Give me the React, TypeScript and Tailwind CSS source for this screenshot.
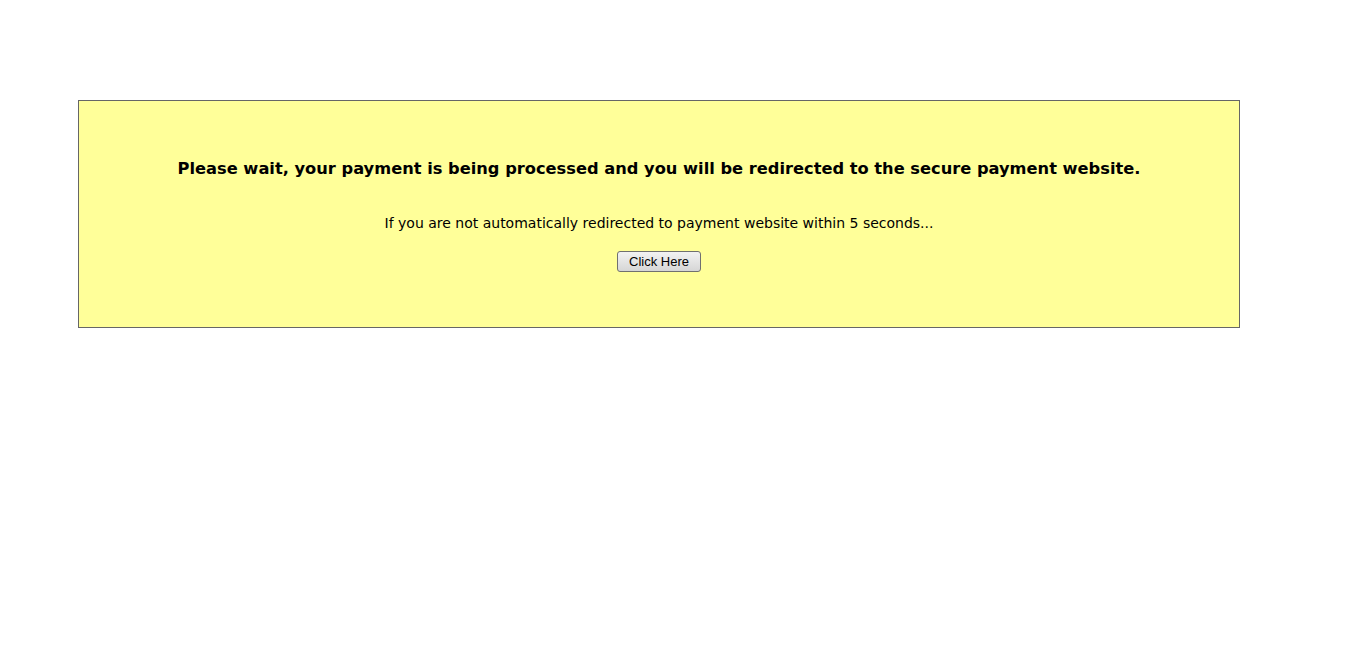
import React from "react";

const App: React.FC = () => {
  return (
    <div className="min-h-screen bg-white pt-[100px] font-['DejaVu_Sans',Verdana,sans-serif] text-black">
      <div className="ml-[78px] w-[1162px] h-[228px] border border-[#666666] bg-[#ffff99] flex flex-col items-center">
        <h1 className="mt-[57px] text-[16.25px] font-bold leading-[22px]">
          Please wait, your payment is being processed and you will be redirected to the secure payment website.
        </h1>
        <p className="mt-[34px] text-[14px] leading-[18px]">
          If you are not automatically redirected to payment website within 5 seconds...
        </p>
        <button className="mt-[19px] w-[84px] h-[21px] rounded-[3px] border border-[#707070] bg-gradient-to-b from-[#f2f2f2] to-[#d6d6d6] font-['Liberation_Sans',Arial,sans-serif] text-[13px] leading-none">
          Click Here
        </button>
      </div>
    </div>
  );
};

export default App;
